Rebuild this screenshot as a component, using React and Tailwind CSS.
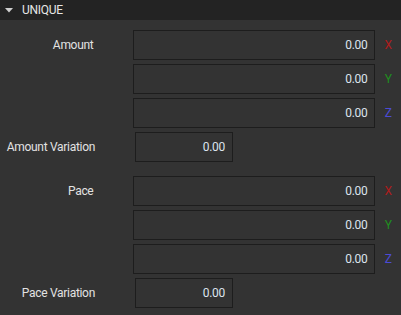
import React from 'react';

const AXIS_COLORS = {
  X: 'text-[#b01c1c]',
  Y: 'text-[#1f8f1f]',
  Z: 'text-[#4b4bd6]',
};

function Field({ value, wide }) {
  return (
    <div
      className={`${wide ? 'w-[242px]' : 'w-[98px]'} h-[30px] border border-[#1d1d1d] bg-[#333333] flex items-center justify-end pr-[7px] text-[#dce4ee]`}
    >
      {value}
    </div>
  );
}

function VectorGroup({ label }) {
  return (
    <div className="flex flex-col gap-[4px]">
      {['X', 'Y', 'Z'].map((axis, i) => (
        <div key={axis} className="flex items-center">
          <div className="w-[95px] text-right whitespace-nowrap text-[#e2e2e2]">{i === 0 ? label : ''}</div>
          <div className="ml-[40px]">
            <Field value="0.00" wide />
          </div>
          <div className={`w-[26px] text-center ${AXIS_COLORS[axis]}`}>{axis}</div>
        </div>
      ))}
    </div>
  );
}

function ScalarRow({ label }) {
  return (
    <div className="flex items-center">
      <div className="w-[95px] text-right whitespace-nowrap text-[#e2e2e2]">{label}</div>
      <div className="ml-[40px]">
        <Field value="0.00" />
      </div>
    </div>
  );
}

export default function App() {
  return (
    <div
      className="w-[401px] h-[315px] bg-[#333333] text-[12px] tracking-[-0.3px] overflow-hidden"
      style={{ fontFamily: 'Roboto, sans-serif' }}
    >
      <div className="h-[20px] bg-[#232323] flex items-center pl-[5px] gap-[9px] text-[#e6e6e6]">
        <svg width="8" height="5" viewBox="0 0 8 5">
          <path d="M0 0 H8 L4 4.5 Z" fill="#cfcfcf" />
        </svg>
        <span>UNIQUE</span>
      </div>
      <div className="pt-[10px] flex flex-col gap-[14px]">
        <div className="flex flex-col gap-[4px]">
          <VectorGroup label="Amount" />
          <ScalarRow label="Amount Variation" />
        </div>
        <div className="flex flex-col gap-[4px]">
          <VectorGroup label="Pace" />
          <ScalarRow label="Pace Variation" />
        </div>
      </div>
    </div>
  );
}
